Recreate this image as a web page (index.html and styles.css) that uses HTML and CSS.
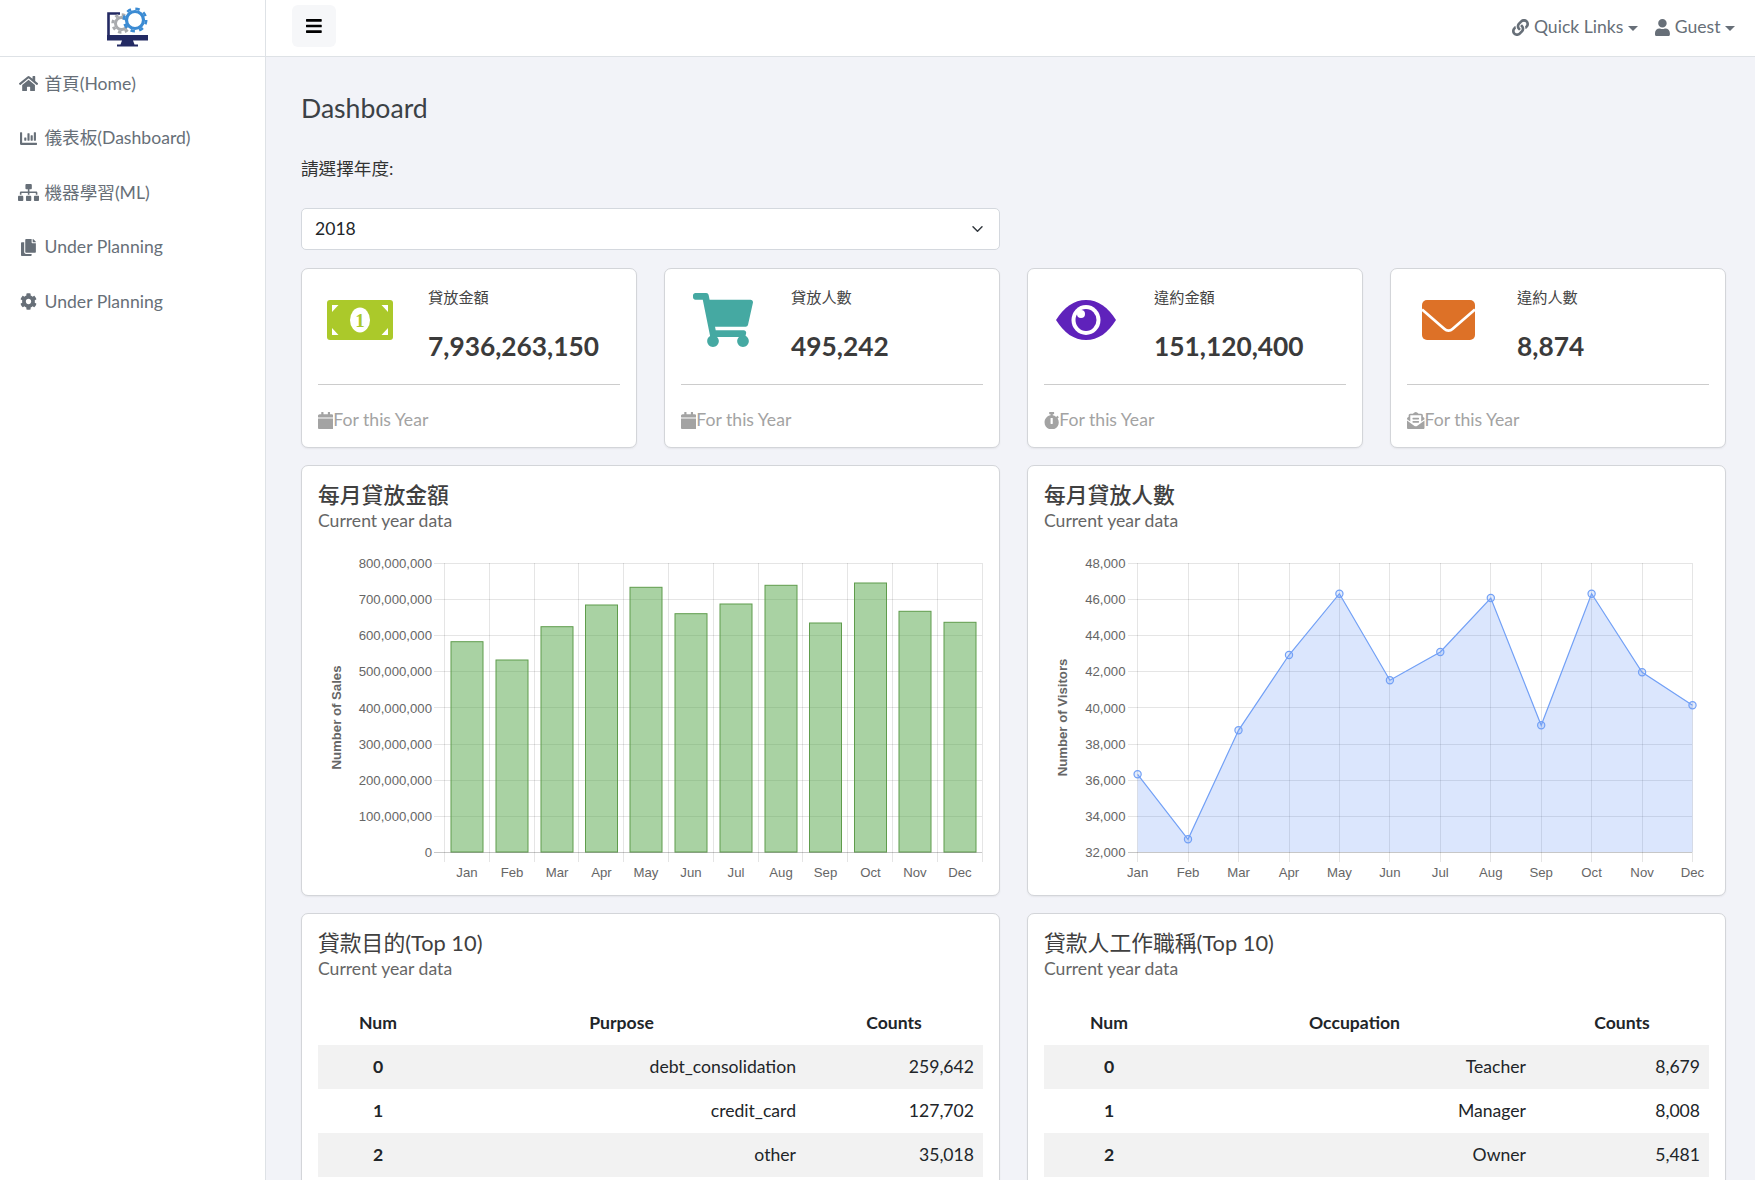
FILE: index.html
```html
<!DOCTYPE html>
<html lang="zh-Hant">
<head>
<meta charset="utf-8">
<title>Dashboard</title>
<meta name="viewport" content="width=device-width,initial-scale=1">
<link rel="stylesheet" href="styles.css">
</head>
<body>
<div class="shell">

<aside class="sidebar">
  <div class="brand">
    <svg class="logo" viewBox="0 0 41 42" aria-label="logo">
      <path d="M1.500 30V8.500H13" fill="none" stroke="#232a63" stroke-width="2.600"/>
      <path d="M0 30h41v5.500H0zM15 35.500h11l1.500 4H31v2H10v-2h3.500z" fill="#232a63"/>
      <circle cx="14.500" cy="18.500" r="6" fill="none" stroke="#a9abae" stroke-width="3"/>
      <circle cx="14.500" cy="18.500" r="8.700" fill="none" stroke="#a9abae" stroke-width="3" stroke-dasharray="3.400 3.430"/>
      <circle cx="28" cy="15" r="8.500" fill="#fff"/>
      <circle cx="28" cy="15" r="8.500" fill="none" stroke="#3b8bd3" stroke-width="3.200"/>
      <circle cx="28" cy="15" r="11.200" fill="none" stroke="#3b8bd3" stroke-width="2.600" stroke-dasharray="4.400 4.400"/>
    </svg>
  </div>
  <nav class="side-nav">
    <a class="side-link" href="#"><span class="side-icon"><svg class="fa" viewBox="0 0 576 512"><path d="M280.37 148.26L96 300.11V464a16 16 0 0 0 16 16l112.06-.29a16 16 0 0 0 15.92-16V368a16 16 0 0 1 16-16h64a16 16 0 0 1 16 16v95.64a16 16 0 0 0 16 16.05L464 480a16 16 0 0 0 16-16V300L295.67 148.26a12.19 12.19 0 0 0-15.3 0zM571.6 251.47L488 182.56V44.05a12 12 0 0 0-12-12h-56a12 12 0 0 0-12 12v72.61L318.47 43a48 48 0 0 0-61 0L4.34 251.47a12 12 0 0 0-1.6 16.9l25.5 31A12 12 0 0 0 45.15 301l235.22-193.74a12.19 12.19 0 0 1 15.3 0L530.9 301a12 12 0 0 0 16.9-1.6l25.5-31a12 12 0 0 0-1.7-16.93z"/></svg></span>首頁(Home)</a>
    <a class="side-link" href="#"><span class="side-icon"><svg class="fa" viewBox="0 0 512 512"><path d="M332.8 320h38.4c6.4 0 12.8-6.4 12.8-12.8V172.8c0-6.4-6.4-12.8-12.8-12.8h-38.4c-6.4 0-12.8 6.4-12.8 12.800v134.400c0 6.400 6.400 12.800 12.800 12.800zm96 0h38.400c6.400 0 12.800-6.400 12.800-12.800V76.800c0-6.400-6.400-12.800-12.800-12.800h-38.400c-6.400 0-12.800 6.400-12.800 12.800v230.400c0 6.400 6.400 12.800 12.800 12.800zm-288 0h38.400c6.400 0 12.800-6.400 12.800-12.800v-70.400c0-6.400-6.400-12.800-12.800-12.800h-38.400c-6.400 0-12.800 6.400-12.800 12.800v70.400c0 6.400 6.400 12.800 12.800 12.800zm96 0h38.400c6.400 0 12.800-6.400 12.800-12.800V108.800c0-6.400-6.400-12.800-12.800-12.800h-38.400c-6.400 0-12.800 6.400-12.800 12.800v198.400c0 6.400 6.400 12.800 12.800 12.800zM496 384H64V80c0-8.840-7.160-16-16-16H16C7.160 64 0 71.160 0 80v336c0 17.670 14.330 32 32 32h464c8.840 0 16-7.160 16-16v-32c0-8.840-7.160-16-16-16z"/></svg></span>儀表板(Dashboard)</a>
    <a class="side-link" href="#"><span class="side-icon"><svg class="fa" viewBox="0 0 640 512"><path d="M128 352H32c-17.670 0-32 14.330-32 32v96c0 17.670 14.330 32 32 32h96c17.670 0 32-14.330 32-32v-96c0-17.670-14.330-32-32-32zm-24-80h192v48h48v-48h192v48h48v-57.590c0-21.170-17.230-38.410-38.410-38.410H344v-64h40c17.670 0 32-14.330 32-32V32c0-17.670-14.330-32-32-32H256c-17.670 0-32 14.330-32 32v96c0 17.670 14.330 32 32 32h40v64H94.410C73.230 224 56 241.230 56 262.410V320h48v-48zm264 80h-96c-17.670 0-32 14.330-32 32v96c0 17.670 14.330 32 32 32h96c17.670 0 32-14.330 32-32v-96c0-17.670-14.330-32-32-32zm240 0h-96c-17.670 0-32 14.330-32 32v96c0 17.670 14.330 32 32 32h96c17.670 0 32-14.330 32-32v-96c0-17.670-14.330-32-32-32z"/></svg></span>機器學習(ML)</a>
    <a class="side-link" href="#"><span class="side-icon"><svg class="fa" viewBox="0 0 448 512"><path d="M320 448v40c0 13.255-10.745 24-24 24H24c-13.255 0-24-10.745-24-24V120c0-13.255 10.745-24 24-24h72v296c0 30.879 25.121 56 56 56h168zm0-344V0H152c-13.255 0-24 10.745-24 24v368c0 13.255 10.745 24 24 24h272c13.255 0 24-10.745 24-24V128H344c-13.200 0-24-10.800-24-24zm120.971-31.029L375.029 7.029A24 24 0 0 0 358.059 0H352v96h96v-6.059a24 24 0 0 0-7.029-16.970z"/></svg></span>Under Planning</a>
    <a class="side-link" href="#"><span class="side-icon"><svg class="fa" viewBox="0 0 512 512"><path d="M487.400 315.700l-42.600-24.600c4.300-23.200 4.300-47 0-70.200l42.600-24.600c4.900-2.800 7.100-8.600 5.500-14-11.100-35.600-30-67.800-54.700-94.600-3.800-4.100-10-5.100-14.800-2.300L380.800 110c-17.900-15.400-38.500-27.300-60.800-35.100V25.800c0-5.600-3.900-10.500-9.400-11.700-36.700-8.200-74.300-7.800-109.200 0-5.500 1.200-9.400 6.100-9.400 11.700V75c-22.200 7.900-42.800 19.800-60.800 35.100L88.700 85.500c-4.900-2.800-11-1.900-14.800 2.300-24.700 26.700-43.600 58.900-54.700 94.600-1.700 5.400.6 11.200 5.500 14L67.300 221c-4.300 23.200-4.300 47 0 70.200l-42.600 24.600c-4.900 2.800-7.100 8.600-5.500 14 11.100 35.600 30 67.800 54.700 94.600 3.800 4.100 10 5.100 14.800 2.300l42.600-24.600c17.900 15.400 38.500 27.300 60.800 35.100v49.200c0 5.600 3.900 10.500 9.400 11.700 36.700 8.200 74.300 7.800 109.200 0 5.500-1.200 9.400-6.100 9.400-11.700v-49.200c22.200-7.900 42.800-19.800 60.800-35.100l42.600 24.600c4.900 2.800 11 1.900 14.800-2.300 24.700-26.700 43.600-58.900 54.700-94.600 1.500-5.500-.7-11.300-5.600-14.100zM256 336c-44.100 0-80-35.900-80-80s35.900-80 80-80 80 35.900 80 80-35.900 80-80 80z"/></svg></span>Under Planning</a>
  </nav>
</aside>

<div class="content">
  <header class="topbar">
    <button class="menu-btn" type="button" aria-label="menu">
      <svg class="fa" viewBox="0 0 448 512"><path d="M16 132h416c8.837 0 16-7.163 16-16V76c0-8.837-7.163-16-16-16H16C7.163 60 0 67.163 0 76v40c0 8.837 7.163 16 16 16zm0 160h416c8.837 0 16-7.163 16-16v-40c0-8.837-7.163-16-16-16H16c-8.837 0-16 7.163-16 16v40c0 8.837 7.163 16 16 16zm0 160h416c8.837 0 16-7.163 16-16v-40c0-8.837-7.163-16-16-16H16c-8.837 0-16 7.163-16 16v40c0 8.837 7.163 16 16 16z"/></svg>
    </button>
    <div class="top-links">
      <a class="top-link" href="#"><svg class="fa" viewBox="0 0 512 512"><path d="M326.612 185.391c59.747 59.809 58.927 155.698.36 214.590-.11.12-.24.25-.36.37l-67.200 67.200c-59.270 59.270-155.699 59.262-214.960 0-59.270-59.260-59.270-155.700 0-214.960l37.106-37.106c9.840-9.840 26.786-3.300 27.294 10.606.648 17.722 3.826 35.527 9.690 52.721 1.986 5.822.567 12.262-3.783 16.612l-13.087 13.087c-28.026 28.026-28.905 73.660-1.155 101.960 28.024 28.579 74.086 28.749 102.325.51l67.200-67.190c28.191-28.191 28.073-73.757 0-101.830-3.701-3.694-7.429-6.564-10.341-8.569a16.037 16.037 0 0 1-6.947-12.606c-.396-10.567 3.348-21.456 11.698-29.806l21.054-21.055c5.521-5.521 14.182-6.199 20.584-1.731a152.482 152.482 0 0 1 20.522 17.197zM467.547 44.449c-59.261-59.262-155.690-59.270-214.960 0l-67.200 67.200c-.12.12-.25.25-.36.37-58.566 58.892-59.387 154.781.36 214.590a152.454 152.454 0 0 0 20.521 17.196c6.402 4.468 15.064 3.789 20.584-1.731l21.054-21.055c8.350-8.350 12.094-19.239 11.698-29.806a16.037 16.037 0 0 0-6.947-12.606c-2.912-2.005-6.640-4.875-10.341-8.569-28.073-28.073-28.191-73.639 0-101.830l67.200-67.190c28.239-28.239 74.300-28.069 102.325.51 27.750 28.300 26.872 73.934-1.155 101.960l-13.087 13.087c-4.350 4.350-5.769 10.790-3.783 16.612 5.864 17.194 9.042 34.999 9.690 52.721.509 13.906 17.454 20.446 27.294 10.606l37.106-37.106c59.271-59.259 59.271-155.699.001-214.959z"/></svg>Quick Links<span class="caret"></span></a>
      <a class="top-link" href="#"><svg class="fa" viewBox="0 0 448 512"><path d="M224 256c70.700 0 128-57.300 128-128S294.700 0 224 0 96 57.300 96 128s57.300 128 128 128zm89.600 32h-16.700c-22.200 10.200-46.900 16-72.900 16s-50.600-5.800-72.900-16h-16.700C60.200 288 0 348.200 0 422.400V464c0 26.500 21.500 48 48 48h352c26.500 0 48-21.500 48-48v-41.600c0-74.200-60.200-134.400-134.400-134.400z"/></svg>Guest<span class="caret"></span></a>
    </div>
  </header>

  <main class="page">
    <h1 class="page-title">Dashboard</h1>
    <label class="year-label" for="year">請選擇年度:</label>
    <select class="year-select" id="year"><option>2018</option></select>

    <section class="stats">
      <div class="card stat">
        <div class="stat-top">
          <div class="stat-icon"><svg class="stat-svg" width="66" height="40" viewBox="0 0 66 40"><rect width="66" height="40" rx="3" fill="#abc92a"/><path d="M5 5h6.500L5 12zM61 5h-6.500L61 12zM5 35h6.500L5 28zM61 35h-6.500L61 28z" fill="#fff"/><ellipse cx="33" cy="20" rx="10" ry="12.500" fill="#fff"/><text class="money-one" x="33" y="26.500" text-anchor="middle">1</text></svg></div>
          <div class="stat-text"><p class="stat-label">貸放金額</p><p class="stat-num">7,936,263,150</p></div>
        </div>
        <div class="stat-foot"><svg class="fa" viewBox="0 0 448 512"><path d="M12 192h424c6.600 0 12 5.400 12 12v260c0 26.500-21.500 48-48 48H48c-26.500 0-48-21.500-48-48V204c0-6.600 5.400-12 12-12zm436-44v-36c0-26.500-21.500-48-48-48h-48V12c0-6.600-5.400-12-12-12h-40c-6.600 0-12 5.400-12 12v52H160V12c0-6.600-5.400-12-12-12h-40c-6.600 0-12 5.400-12 12v52H48C21.500 64 0 85.500 0 112v36c0 6.600 5.400 12 12 12h424c6.600 0 12-5.400 12-12z"/></svg>For this Year</div>
      </div>
      <div class="card stat">
        <div class="stat-top">
          <div class="stat-icon"><svg class="stat-svg cart" width="60" height="54" viewBox="0 0 576 512" preserveAspectRatio="none"><path fill="#45a9a2" d="M528.120 301.319l47.273-208C578.806 78.301 567.391 64 551.990 64H159.208l-9.166-44.810C147.758 8.021 137.930 0 126.529 0H24C10.745 0 0 10.745 0 24v16c0 13.255 10.745 24 24 24h69.883l70.248 343.435C147.325 417.100 136 435.222 136 456c0 30.928 25.072 56 56 56s56-25.072 56-56c0-15.674-6.447-29.835-16.824-40h209.647C430.447 426.165 424 440.326 424 456c0 30.928 25.072 56 56 56s56-25.072 56-56c0-22.172-12.888-41.332-31.579-50.405l5.517-24.276c3.413-15.018-8.002-29.319-23.403-29.319H218.117l-6.545-32h293.145c11.206 0 20.920-7.754 23.403-18.681z"/></svg></div>
          <div class="stat-text"><p class="stat-label">貸放人數</p><p class="stat-num">495,242</p></div>
        </div>
        <div class="stat-foot"><svg class="fa" viewBox="0 0 448 512"><path d="M12 192h424c6.600 0 12 5.400 12 12v260c0 26.500-21.500 48-48 48H48c-26.500 0-48-21.500-48-48V204c0-6.600 5.400-12 12-12zm436-44v-36c0-26.500-21.500-48-48-48h-48V12c0-6.600-5.400-12-12-12h-40c-6.600 0-12 5.400-12 12v52H160V12c0-6.600-5.400-12-12-12h-40c-6.600 0-12 5.400-12 12v52H48C21.500 64 0 85.500 0 112v36c0 6.600 5.400 12 12 12h424c6.600 0 12-5.400 12-12z"/></svg>For this Year</div>
      </div>
      <div class="card stat">
        <div class="stat-top">
          <div class="stat-icon"><svg class="stat-svg eye" width="60" height="40" viewBox="0 0 60 40"><path d="M0 20C8 7 18 0 30 0s22 7 30 20C52 33 42 40 30 40S8 33 0 20z" fill="#5f22bb"/><ellipse cx="30" cy="20" rx="14.500" ry="15" fill="#fff"/><ellipse cx="30" cy="20" rx="10.500" ry="11" fill="#5f22bb"/><circle cx="25" cy="14" r="4" fill="#fff"/></svg></div>
          <div class="stat-text"><p class="stat-label">違約金額</p><p class="stat-num">151,120,400</p></div>
        </div>
        <div class="stat-foot"><svg class="fa" viewBox="0 0 448 512"><path d="M432 304c0 114.900-93.100 208-208 208S16 418.900 16 304c0-104 76.300-190.200 176-205.500V64h-28c-6.600 0-12-5.400-12-12V12c0-6.600 5.400-12 12-12h120c6.600 0 12 5.400 12 12v40c0 6.600-5.400 12-12 12h-28v34.500c37.500 5.800 71.700 21.600 99.700 44.600l27.500-27.500c4.700-4.700 12.300-4.700 17 0l28.300 28.300c4.700 4.700 4.700 12.300 0 17l-29.400 29.400-.6.600C419.700 223.300 432 262.200 432 304zm-176 36V188.500c0-6.600-5.400-12-12-12h-40c-6.600 0-12 5.400-12 12V340c0 6.600 5.400 12 12 12h40c6.600 0 12-5.400 12-12z"/></svg>For this Year</div>
      </div>
      <div class="card stat">
        <div class="stat-top">
          <div class="stat-icon"><svg class="stat-svg mail" width="53" height="40" viewBox="0 0 53 40"><rect width="53" height="40" rx="5" fill="#dd7127"/><path d="M0 9.500L22.500 29a6 6 0 0 0 8 0L53 9.500" fill="none" stroke="#fff" stroke-width="2.800"/></svg></div>
          <div class="stat-text"><p class="stat-label">違約人數</p><p class="stat-num">8,874</p></div>
        </div>
        <div class="stat-foot"><svg class="fa" viewBox="0 0 512 512"><path d="M176 216h160c8.840 0 16-7.160 16-16v-16c0-8.840-7.160-16-16-16H176c-8.840 0-16 7.160-16 16v16c0 8.840 7.160 16 16 16zm-16 80c0 8.840 7.160 16 16 16h160c8.840 0 16-7.160 16-16v-16c0-8.840-7.160-16-16-16H176c-8.840 0-16 7.160-16 16v16zm96 121.130c-16.420 0-32.840-5.060-46.860-15.190L0 250.860V464c0 26.510 21.490 48 48 48h416c26.510 0 48-21.490 48-48V250.860L302.860 401.940c-14.020 10.120-30.440 15.190-46.860 15.190zm237.610-254.180c-8.850-6.940-17.240-13.470-29.610-22.810V96c0-26.510-21.490-48-48-48h-77.550c-3.040-2.200-5.870-4.260-9.040-6.560C312.600 29.170 279.200-.35 256 0c-23.200-.35-56.590 29.170-73.410 41.440-3.170 2.300-6 4.360-9.040 6.560H96c-26.510 0-48 21.490-48 48v44.140c-12.370 9.330-20.760 15.870-29.610 22.810A47.995 47.995 0 0 0 0 200.720v10.650l96 69.350V96h320v184.720l96-69.350v-10.650c0-14.740-6.780-28.670-18.390-37.770z"/></svg>For this Year</div>
      </div>
    </section>

    <section class="two-col">
      <div class="card panel">
        <h4 class="panel-title heavy">每月貸放金額</h4>
        <p class="panel-sub">Current year data</p>
        <svg class="chart" width="665" height="336" viewBox="0 0 665 336">
          <g class="grid">
            <path d="M116 18.500H664M116 54.500H664M116 90.500H664M116 126.500H664M116 162.500H664M116 199.500H664M116 235.500H664M116 271.500H664"/>
            <path d="M126.500 18V317M171.500 18V317M216.500 18V317M260.500 18V317M305.500 18V317M350.500 18V317M395.500 18V317M440.500 18V317M484.500 18V317M529.500 18V317M574.500 18V317M619.500 18V317M664.500 18V317"/>
          </g>
          <g class="bars">
            <rect x="133" y="96.700" width="32" height="210.300"/>
            <rect x="178" y="115" width="32" height="192"/>
            <rect x="223" y="81.700" width="32" height="225.300"/>
            <rect x="267.500" y="60" width="32" height="247"/>
            <rect x="312" y="42.300" width="32" height="264.700"/>
            <rect x="357" y="68.700" width="32" height="238.300"/>
            <rect x="402" y="59" width="32" height="248"/>
            <rect x="447" y="40.300" width="32" height="266.700"/>
            <rect x="491.500" y="78" width="32" height="229"/>
            <rect x="536.500" y="38" width="32" height="269"/>
            <rect x="581" y="66.300" width="32" height="240.700"/>
            <rect x="626" y="77.300" width="32" height="229.700"/>
          </g>
          <path class="base" d="M116 307.500H664"/>
          <g class="y-ticks">
            <text x="114" y="18">800,000,000</text>
            <text x="114" y="54">700,000,000</text>
            <text x="114" y="90">600,000,000</text>
            <text x="114" y="126">500,000,000</text>
            <text x="114" y="163">400,000,000</text>
            <text x="114" y="199">300,000,000</text>
            <text x="114" y="235">200,000,000</text>
            <text x="114" y="271">100,000,000</text>
            <text x="114" y="307">0</text>
          </g>
          <g class="x-ticks">
            <text x="149" y="331.500">Jan</text><text x="194" y="331.500">Feb</text><text x="239" y="331.500">Mar</text><text x="283.500" y="331.500">Apr</text><text x="328" y="331.500">May</text><text x="373" y="331.500">Jun</text><text x="418" y="331.500">Jul</text><text x="463" y="331.500">Aug</text><text x="507.500" y="331.500">Sep</text><text x="552.500" y="331.500">Oct</text><text x="597" y="331.500">Nov</text><text x="642" y="331.500">Dec</text>
          </g>
          <text class="axis-title" transform="translate(18.600 172.500) rotate(-90)">Number of Sales</text>
        </svg>
      </div>
      <div class="card panel">
        <h4 class="panel-title heavy">每月貸放人數</h4>
        <p class="panel-sub">Current year data</p>
        <svg class="chart" width="665" height="336" viewBox="0 0 665 336">
          <g class="grid">
            <path d="M84 18.500H648M84 54.500H648M84 90.500H648M84 126.500H648M84 162.500H648M84 199.500H648M84 235.500H648M84 271.500H648"/>
            <path d="M93.500 18V317M144.500 18V317M194.500 18V317M245.500 18V317M295.500 18V317M345.500 18V317M396.500 18V317M446.500 18V317M497.500 18V317M547.500 18V317M598.500 18V317M648.500 18V317"/>
          </g>
          <path class="area" d="M93.600 307V229.300L144 294.300 194.500 185.300 245 110 295.400 48.700 345.900 135.300 396.300 107 446.800 53 497.200 180.300 547.600 48.700 598.100 127.300 648.500 160.300V307z"/>
          <path class="base" d="M84 307.500H648"/>
          <path class="line" d="M93.600 229.300L144 294.300 194.500 185.300 245 110 295.400 48.700 345.900 135.300 396.300 107 446.800 53 497.200 180.300 547.600 48.700 598.100 127.300 648.500 160.300"/>
          <g class="points">
            <circle cx="93.600" cy="229.300" r="3.600"/><circle cx="144" cy="294.300" r="3.600"/><circle cx="194.500" cy="185.300" r="3.600"/><circle cx="245" cy="110" r="3.600"/><circle cx="295.400" cy="48.700" r="3.600"/><circle cx="345.900" cy="135.300" r="3.600"/><circle cx="396.300" cy="107" r="3.600"/><circle cx="446.800" cy="53" r="3.600"/><circle cx="497.200" cy="180.300" r="3.600"/><circle cx="547.600" cy="48.700" r="3.600"/><circle cx="598.100" cy="127.300" r="3.600"/><circle cx="648.500" cy="160.300" r="3.600"/>
          </g>
          <g class="y-ticks">
            <text x="81.500" y="18">48,000</text>
            <text x="81.500" y="54">46,000</text>
            <text x="81.500" y="90">44,000</text>
            <text x="81.500" y="126">42,000</text>
            <text x="81.500" y="163">40,000</text>
            <text x="81.500" y="199">38,000</text>
            <text x="81.500" y="235">36,000</text>
            <text x="81.500" y="271">34,000</text>
            <text x="81.500" y="307">32,000</text>
          </g>
          <g class="x-ticks">
            <text x="93.600" y="331.500">Jan</text><text x="144" y="331.500">Feb</text><text x="194.500" y="331.500">Mar</text><text x="245" y="331.500">Apr</text><text x="295.400" y="331.500">May</text><text x="345.900" y="331.500">Jun</text><text x="396.300" y="331.500">Jul</text><text x="446.800" y="331.500">Aug</text><text x="497.200" y="331.500">Sep</text><text x="547.600" y="331.500">Oct</text><text x="598.100" y="331.500">Nov</text><text x="648.500" y="331.500">Dec</text>
          </g>
          <text class="axis-title" transform="translate(18.600 172.500) rotate(-90)">Number of Visitors</text>
        </svg>
      </div>
    </section>

    <section class="two-col">
      <div class="card panel">
        <h4 class="panel-title">貸款目的(Top 10)</h4>
        <p class="panel-sub">Current year data</p>
        <table class="data-table purpose">
          <thead><tr><th>Num</th><th>Purpose</th><th>Counts</th></tr></thead>
          <tbody>
            <tr><th>0</th><td>debt_consolidation</td><td>259,642</td></tr>
            <tr><th>1</th><td>credit_card</td><td>127,702</td></tr>
            <tr><th>2</th><td>other</td><td>35,018</td></tr>
          </tbody>
        </table>
      </div>
      <div class="card panel">
        <h4 class="panel-title">貸款人工作職稱(Top 10)</h4>
        <p class="panel-sub">Current year data</p>
        <table class="data-table occupation">
          <thead><tr><th>Num</th><th>Occupation</th><th>Counts</th></tr></thead>
          <tbody>
            <tr><th>0</th><td>Teacher</td><td>8,679</td></tr>
            <tr><th>1</th><td>Manager</td><td>8,008</td></tr>
            <tr><th>2</th><td>Owner</td><td>5,481</td></tr>
          </tbody>
        </table>
      </div>
    </section>
  </main>
</div>

</div>
</body>
</html>
```

FILE: styles.css
```css
*{box-sizing:border-box}
html,body{height:100%;margin:0;overflow:hidden}
body{font-family:Lato,"Noto Sans CJK TC",sans-serif;font-size:17.6px;line-height:1.5;color:#212529;background:#f2f3f8}
p,h1,h4{margin:0}
a{text-decoration:none;color:inherit}
.fa{height:1em;width:auto;fill:currentColor;display:block;flex:none}

.shell{display:flex;height:100vh}

/* sidebar */
.sidebar{width:266px;flex:none;background:#fff;border-right:1px solid #dee2e6}
.brand{height:57px;border-bottom:1px solid #dee2e6;display:flex;justify-content:center;padding-top:5px}
.logo{width:41px;height:42px;margin-left:-10px;display:block}
.side-nav{margin-top:-.5px}
.side-link{display:flex;align-items:center;height:54.5px;padding-left:17.5px;color:#676f78}
.side-icon{width:22px;margin-right:5px;display:flex;justify-content:center;font-size:17px}

/* top bar */
.content{flex:1;min-width:0;display:flex;flex-direction:column}
.topbar{height:57px;flex:none;background:#fff;border-bottom:1px solid #dee2e6;display:flex;align-items:flex-start;justify-content:space-between;padding:5px 20px 0 26px}
.menu-btn{width:44px;height:42px;border:0;border-radius:6px;background:#f6f7f9;color:#000;font-size:18px;display:flex;align-items:center;justify-content:center;padding:0}
.top-links{display:flex;gap:17px;padding-top:9px}
.top-link{display:flex;align-items:center;color:#676f78;height:26px}
.top-link .fa{font-size:17px;margin-right:5px}
.caret{width:0;height:0;margin-left:4.5px;margin-top:2px;border:5px solid transparent;border-top-color:currentColor;border-bottom:0}

/* page */
.page{flex:1;min-height:0;overflow:hidden;padding:36px 29px 0 35px}
.page-title{font-size:26.6px;font-weight:400;line-height:1.2;color:#3c4146}
.year-label{display:block;margin-top:31.5px;line-height:26.4px;color:#333}
.year-select{display:block;width:calc(50% - 13.5px);height:41.5px;margin-top:25.6px;padding:1px 13px 0;font:inherit;color:#212529;background:#fff url("data:image/svg+xml,%3csvg xmlns='http://www.w3.org/2000/svg' viewBox='0 0 16 16'%3e%3cpath fill='none' stroke='%23343a40' stroke-linecap='round' stroke-linejoin='round' stroke-width='2' d='M2 5l6 6 6-6'/%3e%3c/svg%3e") no-repeat right 14px center/15px 12px;border:1px solid #d4d8de;border-radius:5px;appearance:none}

.card{background:#fff;border:1px solid #d3d5d9;border-radius:7px;box-shadow:0 1px 2px rgba(0,0,0,.06)}

/* stat cards */
.stats{display:grid;grid-template-columns:repeat(4,1fr);gap:27px;margin-top:18.5px}
.stat{height:179.5px;padding:15px 16px}
.stat-top{display:flex;height:101px;border-bottom:1px solid #ccc;margin-bottom:22px}
.stat-icon{width:110px;flex:none;padding-left:9px}
.stat-svg{display:block;margin-top:16px}
.stat-svg.cart{margin:9px 0 0 3px}
.stat-svg.eye{margin-left:3px}
.stat-svg.mail{margin-left:6px}
.stat-label{font-size:15.2px;line-height:26px;color:#444}
.stat-num{font-size:26.3px;font-weight:700;line-height:34px;margin-top:19px;color:#3b3b3b}
.stat-foot{display:flex;align-items:center;color:#a3a3a3;line-height:26px}
.stat-foot .fa{font-size:17.5px}
.money-one{font:700 19px "Liberation Serif",serif;fill:#abc92a}

/* panels */
.two-col{display:grid;grid-template-columns:1fr 1fr;gap:27px;margin-top:17.5px}
.stats + .two-col{margin-top:17px}
.panel{padding:13px 16px 13.5px}
.panel-title{font-size:21.8px;font-weight:400;line-height:32px;color:#404040}
.panel-title.heavy{font-weight:500}
.panel-sub{font-size:17.6px;line-height:26px;margin-top:-3px;color:#666}
.chart{display:block;margin-top:11.4px}
.chart text{font:13.2px "Liberation Sans",Arial,sans-serif;fill:#666}
.grid path{fill:none;stroke:rgba(0,0,0,.1);stroke-width:1}
.base{stroke:rgba(0,0,0,.22);fill:none}
.bars rect{fill:rgba(84,166,72,.5);stroke:#5f9c4c;stroke-width:1}
.area{fill:rgba(93,140,245,.22);stroke:none}
.line{fill:none;stroke:#72a0f6;stroke-width:1.2}
.points circle{fill:rgba(114,160,246,.2);stroke:#72a0f6;stroke-width:1.2}
.y-ticks text{text-anchor:end;dominant-baseline:central}
.x-ticks text{text-anchor:middle}
.chart .axis-title{font-weight:700;text-anchor:middle;dominant-baseline:central}

/* tables */
.data-table{width:100%;margin-top:19px;border-collapse:collapse;table-layout:fixed;color:#212529}
.data-table th,.data-table td{padding:0 9px;height:44px;line-height:26px;font-weight:400}
.data-table thead th{font-weight:700;text-align:center}
.data-table tbody th{font-weight:700;text-align:center}
.data-table td{text-align:right}
.data-table tbody tr:nth-child(odd){background:#f2f2f2}
.purpose th:first-child{width:120px}
.purpose th:last-child{width:178px}
.occupation th:first-child{width:130px}
.occupation th:last-child{width:174px}
```
